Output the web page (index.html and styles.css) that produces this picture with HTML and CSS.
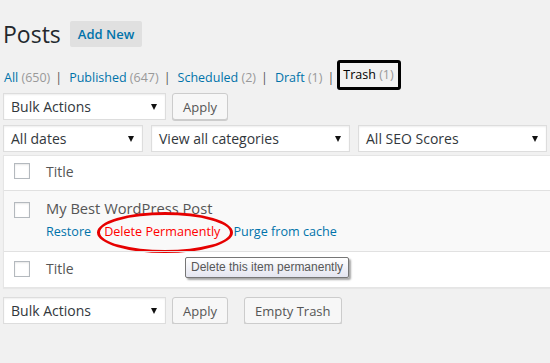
FILE: index.html
```html
<!DOCTYPE html>
<html lang="en">
<head>
  <meta charset="UTF-8">
  <title>Posts</title>
  <link rel="stylesheet" href="styles.css">
</head>
<body>
  <div class="wrap">
    <div class="page-head">
      <h1 class="page-title">Posts</h1>
      <a href="#" class="add-new">Add New</a>
    </div>

    <ul class="subsubsub">
      <li><a href="#">All <span class="count">(650)</span></a><span class="sep">|</span></li>
      <li><a href="#">Published <span class="count">(647)</span></a><span class="sep">|</span></li>
      <li><a href="#">Scheduled <span class="count">(2)</span></a><span class="sep">|</span></li>
      <li><a href="#">Draft <span class="count">(1)</span></a><span class="sep last">|</span></li>
      <li><a href="#" class="current">Trash <span class="count">(1)</span></a></li>
    </ul>

    <div class="tablenav">
      <div class="select w-bulk">Bulk Actions</div>
      <button class="button">Apply</button>
    </div>

    <div class="tablenav filters">
      <div class="select w-dates">All dates</div>
      <div class="select w-cats">View all categories</div>
      <div class="select w-seo">All SEO Scores</div>
    </div>

    <div class="list-table">
      <div class="row head-row">
        <span class="check"></span>
        <span class="col-title">Title</span>
      </div>
      <div class="row post-row">
        <span class="check"></span>
        <div class="col-title">
          <div class="post-name">My Best WordPress Post</div>
          <div class="row-actions">
            <a href="#">Restore</a>
            <a href="#" class="delete">Delete Permanently</a>
            <a href="#">Purge from cache</a>
          </div>
        </div>
        <span class="circle"></span>
        <span class="tooltip">Delete this item permanently</span>
      </div>
      <div class="row foot-row">
        <span class="check"></span>
        <span class="col-title">Title</span>
      </div>
    </div>

    <div class="tablenav bottom">
      <div class="select w-bulk">Bulk Actions</div>
      <button class="button">Apply</button>
      <button class="button empty">Empty Trash</button>
    </div>
  </div>
</body>
</html>
```

FILE: styles.css
```css
/* General Styles */
body {
  margin: 0;
  background: #f1f1f1;
  font-family: 'Open Sans', 'Noto Sans', sans-serif;
  font-size: 13px;
  color: #444;
  overflow: hidden;
}

a {
  color: #0073aa;
  text-decoration: none;
}

.wrap {
  padding: 0 0 0 3px;
}

/* Heading */
.page-head {
  display: flex;
  align-items: center;
  margin-top: 21px;
  height: 26px;
}

.page-title {
  margin: 0;
  font-size: 23px;
  font-weight: 400;
  line-height: 26px;
  color: #23282d;
}

.add-new {
  margin-left: 9px;
  height: 26px;
  padding: 0 8px;
  line-height: 26px;
  background: #e0e0e0;
  border-radius: 2px;
  font-weight: 600;
}

/* Status links */
.subsubsub {
  list-style: none;
  display: flex;
  margin: 21px 0 0 1px;
  padding: 0;
  height: 20px;
  line-height: 20px;
  font-size: 12.5px;
  color: #555;
}

.subsubsub li {
  display: flex;
  white-space: nowrap;
}

.subsubsub .sep {
  margin: 0 7px 0 5px;
}

.subsubsub .sep.last {
  margin-right: 3px;
}

.subsubsub .count {
  color: #999;
}

.subsubsub .current {
  display: inline-block;
  color: #000;
  border: 3px solid #000;
  border-radius: 3px;
  padding: 0 4px 0 3px;
  line-height: 24px;
  margin-top: -8px;
  height: 24px;
}

/* Nav rows */
.tablenav {
  display: flex;
  gap: 6px;
  margin-top: 5px;
  height: 27px;
}

.tablenav.filters {
  gap: 8px;
  margin-top: 5px;
}

.tablenav.bottom {
  margin-top: 9px;
}

.select {
  box-sizing: border-box;
  height: 27px;
  padding: 0 7px;
  line-height: 25px;
  font-size: 14px;
  color: #32373c;
  background: #fff;
  border: 1px solid #ddd;
  box-shadow: inset 0 1px 2px rgba(0, 0, 0, 0.07);
  position: relative;
}

.select::after {
  content: '';
  position: absolute;
  right: 8px;
  top: 10px;
  border-left: 3px solid transparent;
  border-right: 3px solid transparent;
  border-top: 6px solid #111;
}

.w-bulk { width: 163px; }
.w-dates { width: 140px; }
.w-cats { width: 199px; }
.w-seo { width: 189px; }

.button {
  box-sizing: border-box;
  height: 27px;
  padding: 0 10px;
  font-family: inherit;
  font-size: 13px;
  color: #555;
  background: #f7f7f7;
  border: 1px solid #ccc;
  border-radius: 3px;
  box-shadow: 0 1px 0 #ccc;
}

.button.empty {
  margin-left: 10px;
}

/* Table */
.list-table {
  margin-top: 3px;
  width: 560px;
  background: #fff;
  border: 1px solid #e5e5e5;
  box-shadow: 0 1px 1px rgba(0, 0, 0, 0.04);
}

.row {
  display: flex;
  align-items: center;
  padding-left: 10px;
  position: relative;
}

.head-row {
  box-sizing: border-box;
  height: 35px;
  padding-bottom: 4px;
  border-bottom: 1px solid #e1e1e1;
}

.post-row {
  height: 60px;
  align-items: flex-start;
  background: #f9f9f9;
}

.foot-row {
  box-sizing: border-box;
  height: 36px;
  padding-bottom: 2px;
  border-top: 1px solid #e1e1e1;
}

.check {
  box-sizing: border-box;
  flex: none;
  width: 16px;
  height: 16px;
  background: #fff;
  border: 1px solid #b4b9be;
  box-shadow: inset 0 1px 2px rgba(0, 0, 0, 0.1);
}

.post-row .check {
  margin-top: 11px;
}

.col-title {
  margin-left: 16px;
  font-size: 14px;
  color: #555;
}

.post-name {
  margin-top: 7px;
  font-size: 14.7px;
  line-height: 21px;
}

.row-actions {
  display: flex;
  gap: 13px;
  margin-top: 3px;
  font-size: 12.6px;
  line-height: 20px;
}

.row-actions .delete {
  color: #f00;
}

/* Annotations */
.circle {
  position: absolute;
  left: 93px;
  top: 21px;
  width: 130px;
  height: 35px;
  border: 3px solid #e60000;
  border-radius: 50%;
}

.tooltip {
  position: absolute;
  left: 181px;
  top: 66px;
  z-index: 2;
  height: 19px;
  padding: 0 5px;
  font-family: 'Liberation Sans', Arial, sans-serif;
  font-size: 12px;
  line-height: 19px;
  color: #575757;
  white-space: nowrap;
  background: linear-gradient(#fff, #e4e5f0);
  border: 1px solid #767676;
  border-radius: 2px;
  box-shadow: 2px 2px 2px rgba(0, 0, 0, 0.35);
}
```
